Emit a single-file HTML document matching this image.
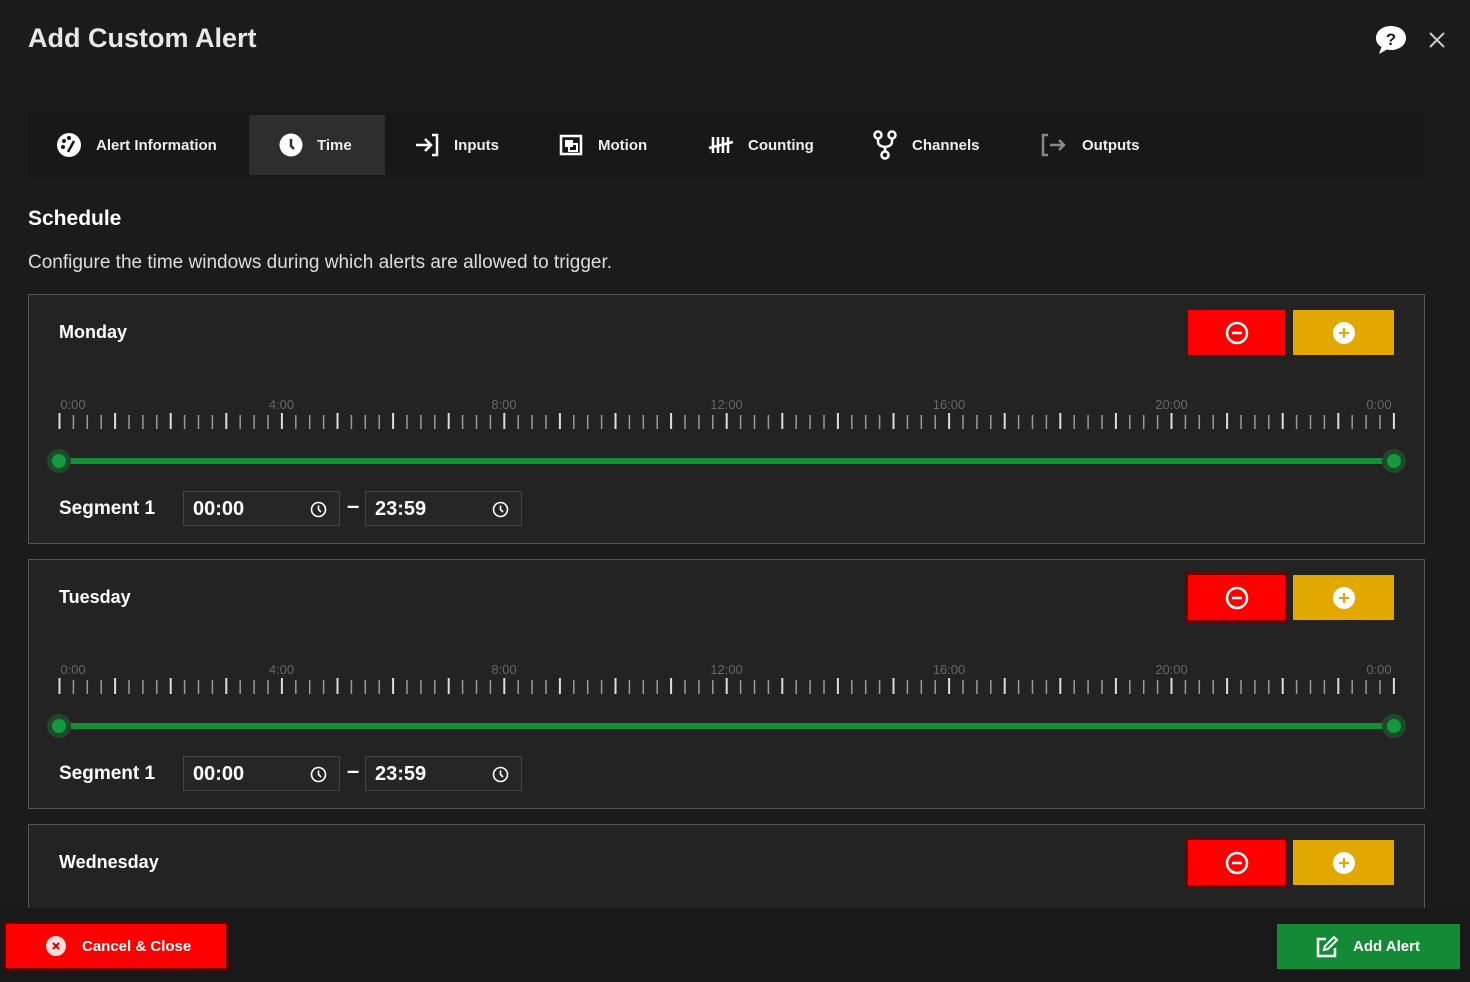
<!DOCTYPE html><html style="width:1470px;height:982px;overflow:hidden"><head><style>
*{box-sizing:border-box;margin:0;padding:0}
body{width:1470px;height:982px;background:#1b1b1b;font-family:"Liberation Sans",sans-serif;color:#fff;position:relative;overflow:hidden}
.abs{position:absolute}
h1{position:absolute;left:28px;top:23px;font-size:27px;font-weight:bold;color:#e8e8e8}
.tabs{position:absolute;left:28px;top:112px;width:1396px;height:66px;background:#181818}
.tab{position:absolute;top:3px;height:60px;display:flex;align-items:center;font-size:15px;font-weight:bold;color:#eee}
.tab svg{margin-right:14px}
.card{position:absolute;left:28px;width:1397px;height:250px;background:#232323;border:1px solid #555}
.day{position:absolute;left:30px;top:27px;font-size:18px;font-weight:bold}
.btn{position:absolute;top:15px;height:45px;display:flex;align-items:center;justify-content:center}
.lbl{position:absolute;top:102px;font-size:13px;color:#666;transform:translateX(-50%)}
.line{position:absolute;left:30px;top:163px;width:1336px;height:6px;background:#129038;border-radius:3px}
.thumb{position:absolute;top:154px;width:24px;height:24px;border-radius:50%;background:#1d4a2a;display:flex;align-items:center;justify-content:center}
.thumb i{width:14px;height:14px;border-radius:50%;background:#149a3d;display:block}
.seg{position:absolute;left:30px;top:203px;font-size:19px;font-weight:bold}
.inp{position:absolute;top:196px;width:157px;height:35px;border:1px solid #444;background:#262626;font-size:20px;font-weight:bold;padding:6px 9px}
.inp svg{position:absolute;right:12px;top:9px}
</style></head><body>
<h1>Add Custom Alert</h1>
<svg class="abs" style="left:1374px;top:24px" width="34" height="32" viewBox="0 0 34 32"><path d="M17 2C8 2 2 7.5 2 14c0 4 2.2 7 5.5 9L5 30l8-4.5c1.3.3 2.6.5 4 .5 9 0 15-5.5 15-12S26 2 17 2z" fill="#fff"/><text x="17" y="21" font-size="17" font-weight="bold" text-anchor="middle" fill="#1b1b1b" font-family="Liberation Sans">?</text></svg>
<svg class="abs" style="left:1429px;top:32px" width="16" height="16"><path d="M1 1L15 15M15 1L1 15" stroke="#ccc" stroke-width="2"/></svg>
<div class="tabs">
<div class="tab" style="left:28px"><svg width="26" height="26" viewBox="0 0 26 26"><circle cx="13" cy="13" r="12" fill="#fff"/><circle cx="8" cy="9" r="2" fill="#181818"/><circle cx="13" cy="6" r="2" fill="#181818"/><circle cx="7" cy="15" r="2" fill="#181818"/><path d="M12 20L18 9" stroke="#181818" stroke-width="2.5"/></svg>Alert Information</div>
<div class="tab" style="left:221px;width:136px;background:#2e2e2e;padding-left:30px"><svg width="24" height="24" viewBox="0 0 24 24"><circle cx="12" cy="12" r="11.5" fill="#fff"/><path d="M12 6v7l3 3" stroke="#2e2e2e" stroke-width="2.5" fill="none"/></svg>Time</div>
<div class="tab" style="left:386px"><svg width="26" height="24" viewBox="0 0 26 24"><path d="M2 12h14M11 6l6 6-6 6M18 2h5v20h-5" stroke="#fff" stroke-width="2.5" fill="none"/></svg>Inputs</div>
<div class="tab" style="left:530px"><svg width="26" height="24" viewBox="0 0 26 24"><rect x="3" y="3" width="20" height="18" stroke="#fff" stroke-width="2.5" fill="none"/><rect x="7" y="7" width="8" height="7" fill="#fff"/><rect x="11" y="11" width="8" height="7" stroke="#fff" stroke-width="2" fill="none"/></svg>Motion</div>
<div class="tab" style="left:680px"><svg width="26" height="24" viewBox="0 0 26 24"><path d="M5 4v16M10 4v16M15 4v16M20 4v16M1 15L25 9" stroke="#fff" stroke-width="2.5"/></svg>Counting</div>
<div class="tab" style="left:844px"><svg width="26" height="30" viewBox="0 0 26 30"><circle cx="6" cy="5" r="3.5" stroke="#fff" stroke-width="2.5" fill="none"/><circle cx="20" cy="5" r="3.5" stroke="#fff" stroke-width="2.5" fill="none"/><circle cx="13" cy="25" r="3.5" stroke="#fff" stroke-width="2.5" fill="none"/><path d="M6 9v3q0 4 7 5q7-1 7-5V9M13 17v4" stroke="#fff" stroke-width="2.5" fill="none"/></svg>Channels</div>
<div class="tab" style="left:1012px;"><svg width="28" height="24" viewBox="0 0 28 24"><path d="M8 2H3v20h5" stroke="#888" stroke-width="2.5" fill="none"/><path d="M10 12h14M19 7l5 5-5 5" stroke="#888" stroke-width="2.5" fill="none"/></svg>Outputs</div>
</div>
<div class="abs" style="left:28px;top:207px;font-size:21px;font-weight:bold">Schedule</div>
<div class="abs" style="left:28px;top:252px;font-size:19px;color:#ddd">Configure the time windows during which alerts are allowed to trigger.</div>
<div id="cards"></div>
<div class="abs" style="left:0;top:908px;width:1470px;height:74px;background:#191919"></div>
<div class="abs" style="left:6px;top:924px;width:220px;height:44px;background:#ff0000;display:flex;align-items:center;padding-left:40px;font-size:15px;font-weight:bold;box-shadow:0 0 0 3px #5a0000"><svg width="20" height="20" style="margin-right:16px"><circle cx="10" cy="10" r="10" fill="#fdd"/><path d="M7 7l6 6M13 7l-6 6" stroke="#c00" stroke-width="2"/></svg>Cancel &amp; Close</div>
<div class="abs" style="left:1277px;top:924px;width:183px;height:45px;background:#138a36;display:flex;align-items:center;padding-left:38px;font-size:15px;font-weight:bold"><svg width="24" height="24" viewBox="0 0 24 24" style="margin-right:14px"><path d="M11 4H3v17h17v-8" stroke="#fff" stroke-width="2.5" fill="none"/><path d="M9 15l1-4 9-9 3 3-9 9z" stroke="#fff" stroke-width="2" fill="none"/></svg>Add Alert</div>
<script>
var days=[["Monday",294],["Tuesday",559],["Wednesday",824]],h="";
days.forEach(function(d,k){
var t='<svg class="abs" style="left:0;top:0" width="1397" height="250">';
for(var i=0;i<=96;i++){var x=30.5+i*13.9,m=i%4==0;t+='<line x1="'+x+'" x2="'+x+'" y1="'+(m?118:120)+'" y2="134" stroke="'+(m?'#ddd':'#999')+'" stroke-width="'+(m?2:1.5)+'"/>';}
t+='</svg>';
var labs="";["0:00","4:00","8:00","12:00","16:00","20:00","0:00"].forEach(function(l,j){labs+='<div class="lbl" style="left:'+(j==0?44:j==6?1350:30+j*222.5)+'px">'+l+'</div>';});
var clk='<svg width="17" height="17" viewBox="0 0 17 17"><circle cx="8.5" cy="8.5" r="7" stroke="#fff" stroke-width="1.6" fill="none"/><path d="M8.5 4.5v4l2.5 2.5" stroke="#fff" stroke-width="1.6" fill="none"/></svg>';
h+='<div class="card" style="top:'+d[1]+'px;'+(k==2?'height:100px':'')+'">'+(k==2?'':t+labs+'<div class="line"></div><div class="thumb" style="left:18px"><i></i></div><div class="thumb" style="left:1353px"><i></i></div><div class="seg">Segment 1</div><div class="inp" style="left:154px">00:00'+clk+'</div><div class="abs" style="left:318px;top:198px;font-size:22px;font-weight:bold">–</div><div class="inp" style="left:336px">23:59'+clk+'</div>')+
'<div class="day">'+d[0]+'</div><div class="btn" style="left:1159px;width:97px;background:#f00;'+(k?'box-shadow:0 0 0 3px #6a0000':'')+'"><svg width="24" height="24"><circle cx="12" cy="12" r="10" stroke="#fff" stroke-width="2.5" fill="none"/><path d="M7 12h10" stroke="#fff" stroke-width="2.5"/></svg></div><div class="btn" style="left:1264px;width:101px;background:#e3a800"><svg width="24" height="24"><circle cx="12" cy="12" r="11" fill="#fff"/><path d="M7 12h10M12 7v10" stroke="#e3a800" stroke-width="2"/></svg></div></div>';
});
document.getElementById("cards").innerHTML=h;
</script>
</body></html>
